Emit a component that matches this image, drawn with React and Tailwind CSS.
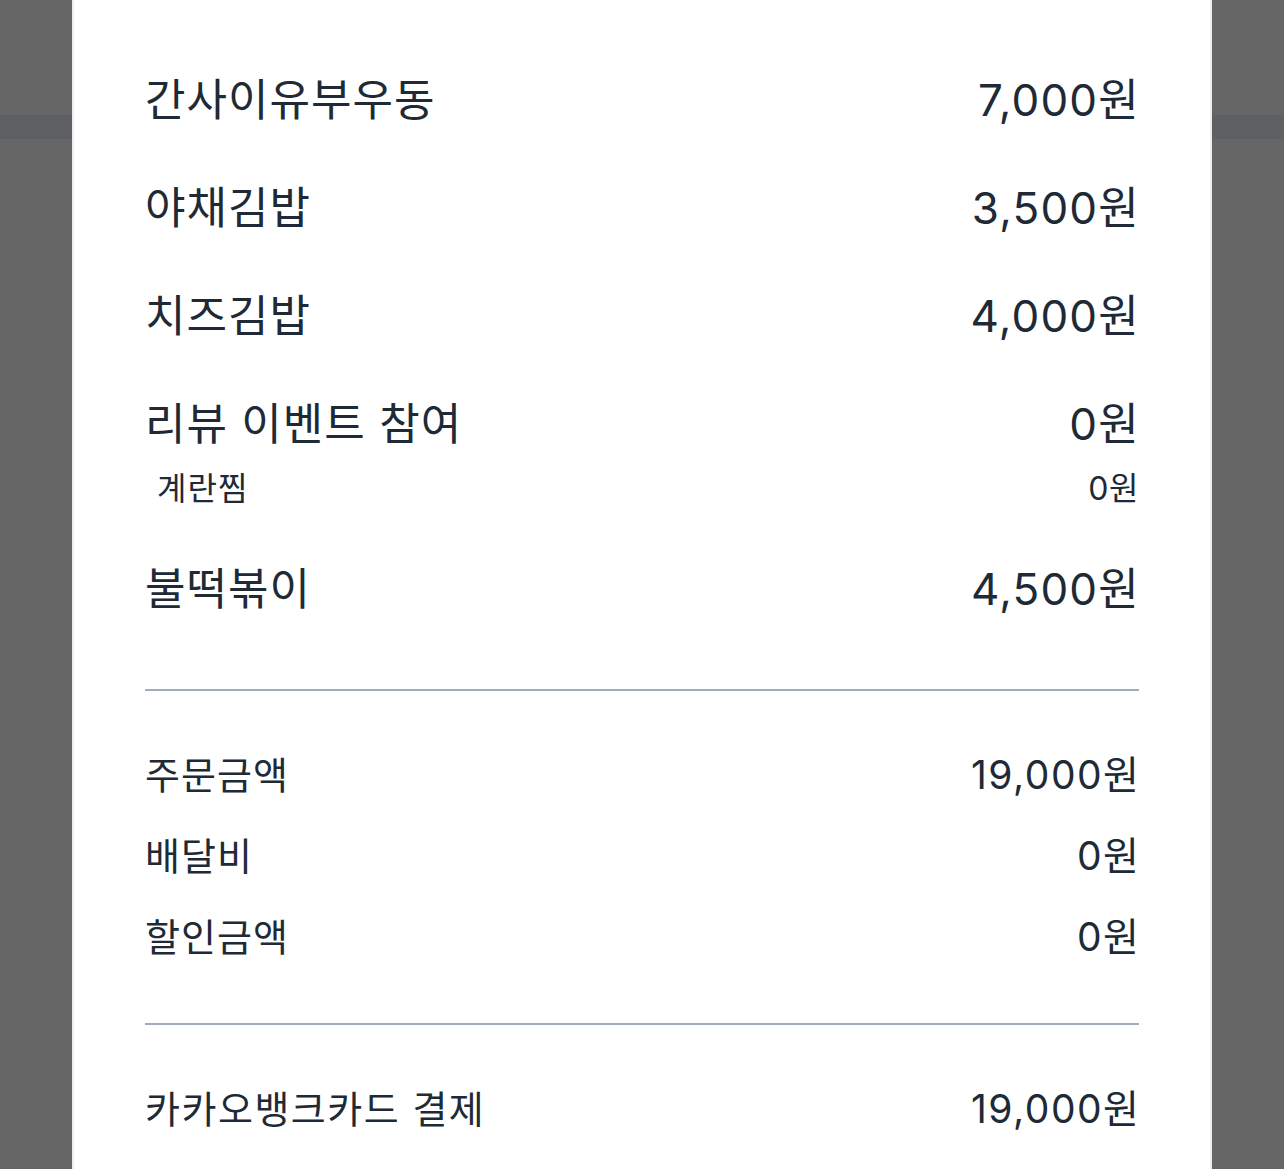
const items = [
  { name: "간사이유부우동", price: "7,000원" },
  { name: "야채김밥", price: "3,500원" },
  { name: "치즈김밥", price: "4,000원" },
  { name: "리뷰 이벤트 참여", price: "0원", options: [{ name: "계란찜", price: "0원" }] },
  { name: "불떡볶이", price: "4,500원" },
];

const summary = [
  { label: "주문금액", value: "19,000원" },
  { label: "배달비", value: "0원" },
  { label: "할인금액", value: "0원" },
];

function ItemRow({ item }) {
  return (
    <div>
      <div className="h-[108px] flex items-center justify-between text-[44px]">
        <span className="tracking-[1px]">{item.name}</span>
        <span className="tracking-[1.2px] -mr-[1px]">{item.price}</span>
      </div>
      {item.options &&
        item.options.map((o) => (
          <div key={o.name} className="-mt-[9px] mb-[26px] h-[40px] flex items-center justify-between text-[32px] pl-3">
            <span className="tracking-[1px]">{o.name}</span>
            <span className="tracking-[0.5px]">{o.price}</span>
          </div>
        ))}
    </div>
  );
}

export default function App() {
  return (
    <div
      className="min-h-[1169px] bg-[linear-gradient(to_bottom,#666666_115px,#5f6064_115px,#5f6064_139px,#666666_139px)] flex justify-center text-[#202a36]"
      style={{ fontFamily: 'Inter, "Noto Sans CJK KR", "Noto Sans", sans-serif' }}
    >
      <div className="w-[1140px] bg-white border-x-2 border-[#eeeeee] px-[71px] pt-[46px] pb-10">
        {items.map((it) => (
          <ItemRow key={it.name} item={it} />
        ))}

        <div className="mt-[46px] h-[2px] bg-[#a3adb9]" />

        <div className="mt-[44px]">
          {summary.map((s) => (
            <div key={s.label} className="h-[81px] flex items-center justify-between text-[38px]">
              <span className="tracking-[1px]">{s.label}</span>
              <span className="text-[39px] tracking-[1.5px] -mr-[1.5px]">{s.value}</span>
            </div>
          ))}
        </div>

        <div className="mt-[45px] h-[2px] bg-[#a3adb9]" />

        <div className="mt-[44px] h-[80px] flex items-center justify-between text-[38px]">
          <span className="tracking-[1.5px]">카카오뱅크카드 결제</span>
          <span className="text-[39px] tracking-[1.5px] -mr-[1.5px]">19,000원</span>
        </div>
      </div>
    </div>
  );
}
